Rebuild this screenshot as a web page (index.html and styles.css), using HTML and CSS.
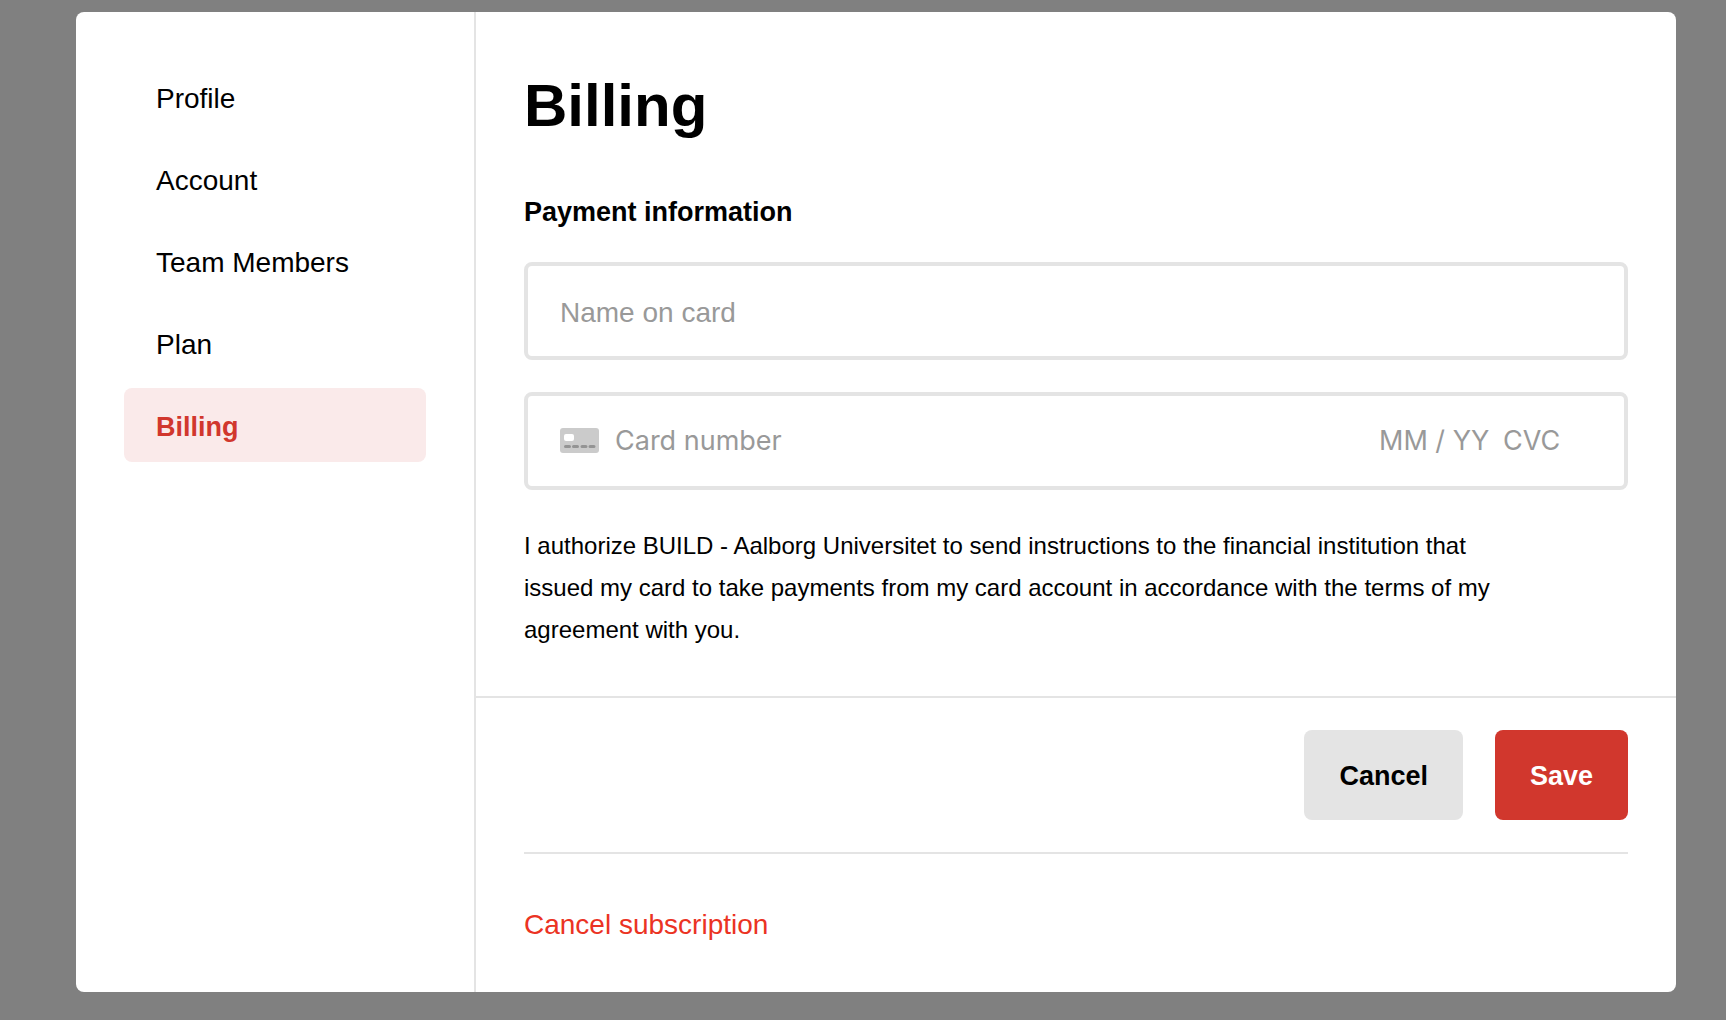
FILE: index.html
```html
<!DOCTYPE html>
<html lang="en">
<head>
<meta charset="utf-8">
<meta name="viewport" content="width=device-width, initial-scale=1">
<title>Billing</title>
<link rel="stylesheet" href="styles.css">
</head>
<body>
<div class="modal" role="dialog" aria-labelledby="title">
  <nav class="sidebar" aria-label="Settings">
    <a class="nav-item" href="#profile">Profile</a>
    <a class="nav-item" href="#account">Account</a>
    <a class="nav-item" href="#team">Team Members</a>
    <a class="nav-item" href="#plan">Plan</a>
    <a class="nav-item nav-item-active" href="#billing" aria-current="page">Billing</a>
  </nav>
  <main class="content">
    <form class="form">
      <section class="details">
        <h1 class="title" id="title">Billing</h1>
        <h2 class="subtitle">Payment information</h2>
        <div class="fields">
          <input class="field name-field" type="text" placeholder="Name on card" aria-label="Name on card">
          <div class="field card-field">
            <svg class="card-icon" width="39" height="26" viewBox="0 0 39 26" aria-hidden="true">
              <rect width="39" height="25" rx="3" fill="#cbcbcb"/>
              <rect x="4" y="6" width="10" height="7" rx="2" fill="#fff"/>
              <path d="M5.500 18.500h4M13.500 18.500h4M22 18.500h4M30 18.500h4" stroke="#949494" stroke-width="3" stroke-linecap="round"/>
            </svg>
            <input class="card-input card-number" type="text" inputmode="numeric" placeholder="Card number" aria-label="Card number">
            <input class="card-input card-expiry" type="text" inputmode="numeric" placeholder="MM / YY" aria-label="Expiry date">
            <input class="card-input card-cvc" type="text" inputmode="numeric" placeholder="CVC" aria-label="CVC">
          </div>
        </div>
        <p class="terms">I authorize BUILD - Aalborg Universitet to send instructions to the financial institution that issued my card to take payments from my card account in accordance with the terms of my agreement with you.</p>
      </section>
      <div class="actions">
        <button class="button button-secondary" type="button">Cancel</button>
        <button class="button button-primary" type="submit">Save</button>
      </div>
    </form>
    <div class="subscription">
      <a class="cancel-link" href="#cancel-subscription">Cancel subscription</a>
    </div>
  </main>
</div>
</body>
</html>
```
FILE: styles.css
```css
* {
  box-sizing: border-box;
}

body {
  margin: 0;
  min-height: 100vh;
  padding: 12px 50px 28px 76px;
  display: flex;
  background: #808080;
  color: #000;
  font-family: "Liberation Sans", Arial, sans-serif;
  font-size: 28px;
  line-height: 44px;
}

.modal {
  flex: 1;
  display: flex;
  background: #fff;
  border-radius: 8px;
  overflow: hidden;
}

.sidebar {
  flex: 0 0 400px;
  display: flex;
  flex-direction: column;
  gap: 8px;
  padding: 48px;
  border-right: 2px solid #e4e4e4;
}

.nav-item {
  padding: 17px 32px 13px;
  border-radius: 8px;
  color: inherit;
  text-decoration: none;
}

.nav-item-active {
  background: #faeaea;
  color: #d1372d;
  font-size: 27px;
  font-weight: 700;
}

.content {
  flex: 1;
  min-width: 0;
}

.details {
  padding: 50px 48px 45px;
}

.title {
  margin: 0 0 40px;
  font-size: 60px;
  line-height: 88px;
}

.subtitle {
  margin: 0 0 28px;
  font-size: 27px;
}

.fields {
  display: flex;
  flex-direction: column;
  gap: 32px;
}

.field {
  width: 100%;
  height: 98px;
  padding: 0 32px;
  border: 4px solid #e4e4e4;
  border-radius: 8px;
  background: #fff;
}

.name-field {
  padding-top: 4px;
  font: inherit;
}

.card-field {
  display: flex;
  align-items: center;
}

.card-icon {
  flex: none;
  margin-right: 16px;
}

.card-input {
  min-width: 0;
  padding: 0;
  border: 0;
  background: none;
  font-family: Inter, Roboto, sans-serif;
  font-size: 27px;
  line-height: 44px;
}

.card-number {
  flex: 1;
}

.card-expiry {
  width: 124px;
}

.card-cvc {
  width: 89px;
}

::placeholder {
  color: #999;
  opacity: 1;
}

.terms {
  max-width: 984px;
  margin: 35px 0 0;
  font-size: 24px;
  line-height: 42px;
}

.actions {
  display: flex;
  justify-content: flex-end;
  gap: 32px;
  padding: 32px 48px;
  border-top: 2px solid #e4e4e4;
}

.button {
  padding: 24px 35px 22px;
  border: 0;
  border-radius: 8px;
  font: inherit;
  font-size: 27px;
  font-weight: 700;
}

.button-secondary {
  background: #e4e4e4;
  color: #000;
}

.button-primary {
  background: #d1372d;
  color: #fff;
}

.subscription {
  margin: 0 48px;
  padding: 49px 0 45px;
  border-top: 2px solid #e4e4e4;
}

.cancel-link {
  color: #eb3323;
  text-decoration: none;
}
```
